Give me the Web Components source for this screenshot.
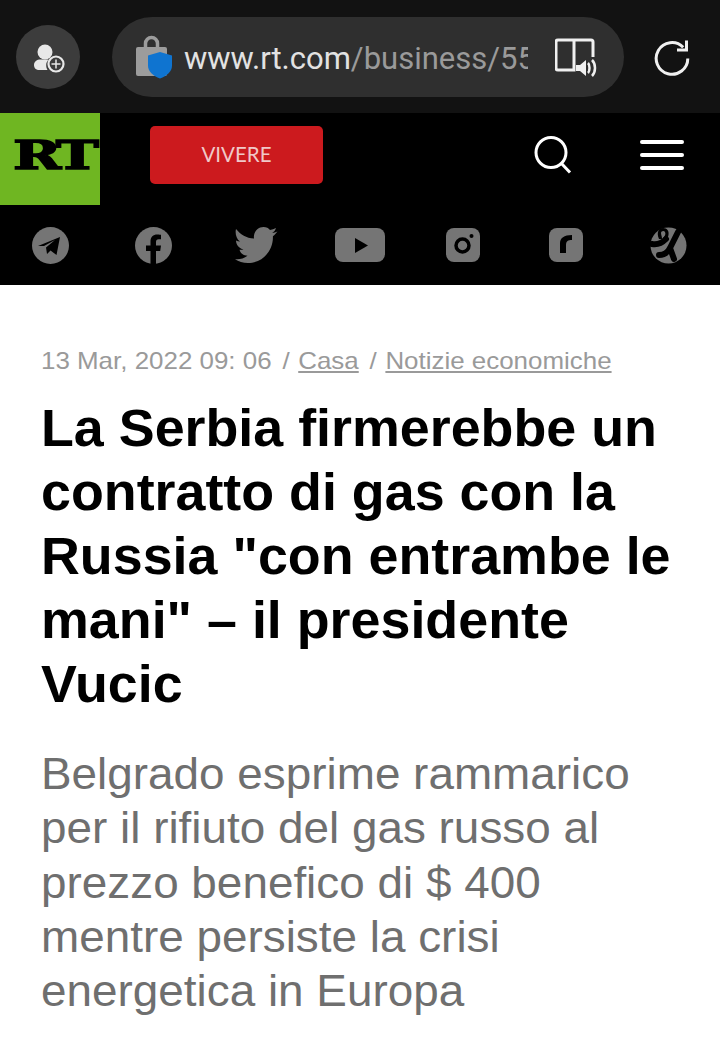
<!DOCTYPE html>
<html lang="it">
<head>
<meta charset="utf-8">
<title>RT</title>
<style>
    html, body { margin: 0; background: #fff; }
    body { width: 720px; height: 1040px; overflow: hidden; font-family: "Liberation Sans", Arial, sans-serif; }
</style>
</head>
<body>
<browser-bar url-host="www.rt.com" url-path="/business/552"></browser-bar>
<site-header label="VIVERE"></site-header>
<social-row></social-row>
<article-head>
    <span slot="date">13 Mar, 2022 09: 06</span>
    <a slot="crumb">Casa</a>
    <a slot="crumb2">Notizie economiche</a>
    <span slot="title">La Serbia firmerebbe un contratto di gas con la Russia "con entrambe le mani" – il presidente Vucic</span>
    <span slot="summary">Belgrado esprime rammarico per il rifiuto del gas russo al prezzo benefico di $ 400 mentre persiste la crisi energetica in Europa</span>
</article-head>

<script>
(function () {
    'use strict';

    class BrowserBar extends HTMLElement {
        constructor () {
            super();
            this.attachShadow({ mode: 'open' });
            this.shadowRoot.innerHTML = `
                <style>
                    :host { display: flex; align-items: center; height: 113px; padding: 0 26px 0 16px; box-sizing: border-box; background: #121212; }
                    .profile { width: 64px; height: 64px; border-radius: 50%; background: #3c3c3c; display: flex; align-items: center; justify-content: center; flex: none; }
                    .pill { margin-left: 32px; width: 512px; height: 80px; border-radius: 40px; background: #2f2f2f; display: flex; align-items: center; padding-left: 24px; box-sizing: border-box; flex: none; }
                    .lock { flex: none; }
                    .url { margin-left: 11px; width: 344px; overflow: hidden; white-space: nowrap; font: 31px Roboto, sans-serif; color: #9a9a9a; line-height: 40px; margin-top: 4px; }
                    .url b { font-weight: 400; color: #e2e2e2; }
                    .reader { margin-left: 27px; flex: none; }
                    .reload { margin-left: 28px; margin-top: 2px; flex: none; }
                </style>
                <div class="profile">
                    <svg width="36" height="36" viewBox="0 0 36 36">
                        <circle cx="15" cy="13" r="7.500" fill="#e8e8e8"/>
                        <path d="M4 26c0-3.500 3-5.500 6.500-5.500h8c-1.500 2-2.300 3.500-2.300 5.500 0 2 .4 3.500 1.300 5h-8C6 31 4 29 4 26z" fill="#e8e8e8"/>
                        <circle cx="26" cy="25" r="7.500" fill="#3c3c3c" stroke="#e8e8e8" stroke-width="2.200"/>
                        <path d="M26 20.500v9M21.500 25h9" stroke="#e8e8e8" stroke-width="1.500"/>
                    </svg>
                </div>
                <div class="pill">
                    <svg class="lock" width="37" height="44" viewBox="0 0 37 44">
                        <path d="M9.500 14V8.500a6 6 0 0 1 12 0V14" fill="none" stroke="#9c9c9c" stroke-width="3.500"/>
                        <rect x="0" y="12" width="31" height="29" rx="2" fill="#9c9c9c"/>
                        <path d="M24 17l12 3.500v10c0 6-5 10.500-12 13-7-2.500-12-7-12-13v-10z" fill="#0f74d0"/>
                    </svg>
                    <div class="url"><b>${this.getAttribute('url-host')}</b>${this.getAttribute('url-path')}</div>
                    <svg class="reader" width="42" height="40" viewBox="0 0 42 40">
                        <path d="M19 33H3a2 2 0 0 1-2-2V5a2 2 0 0 1 2-2h16zM19 3h17a2 2 0 0 1 2 2v15M19 3v19" fill="none" stroke="#f0f0f0" stroke-width="3"/>
                        <path d="M21 28h4l6-5v16l-6-5h-4z" fill="#f0f0f0"/>
                        <path d="M33 26c2 2 2 8 0 10M37 23c4 4 4 12 0 16" fill="none" stroke="#f0f0f0" stroke-width="2.500"/>
                    </svg>
                </div>
                <svg class="reload" width="38" height="38" viewBox="0 0 38 38">
                    <path d="M31.200 8.300A15.800 15.800 0 1 0 35.800 19.500" fill="none" stroke="#f0f0f0" stroke-width="3"/>
                    <path d="M25 11h9.500V1.500" fill="none" stroke="#f0f0f0" stroke-width="3"/>
                </svg>
            `;
        }
    }

    class SiteHeader extends HTMLElement {
        constructor () {
            super();
            this.attachShadow({ mode: 'open' });
            this.shadowRoot.innerHTML = `
                <style>
                    :host { display: flex; align-items: center; height: 92px; background: #000; }
                    .logo { width: 100px; height: 92px; background: #6fb622; overflow: hidden; flex: none; position: relative; }
                    .logo span { position: absolute; left: 13px; top: 16px; font: 700 40px/52px "DejaVu Serif", serif; color: #000; letter-spacing: -3px; transform: scaleX(1.45); transform-origin: left; -webkit-text-stroke: 1.500px #000; }
                    .live { margin: 0 0 8px 50px; width: 173px; height: 58px; background: #cc1a1e; border-radius: 5px; color: #f0c8c8; font: 20.500px/56px Lato, sans-serif; text-align: center; flex: none; }
                    .search { margin: 0 0 8px 211px; flex: none; }
                    .menu { margin: 0 0 9px 68px; width: 44px; display: flex; flex-direction: column; gap: 9px; flex: none; }
                    .menu i { display: block; height: 4px; border-radius: 2px; background: #fff; }
                </style>
                <div class="logo"><span>RT</span></div>
                <div class="live">${this.getAttribute('label')}</div>
                <svg class="search" width="38" height="38" viewBox="0 0 38 38">
                    <circle cx="17" cy="16.500" r="15" fill="none" stroke="#fff" stroke-width="3"/>
                    <path d="M27 27l9 9.500" stroke="#fff" stroke-width="3"/>
                </svg>
                <div class="menu"><i></i><i></i><i></i></div>
            `;
        }
    }

    class SocialRow extends HTMLElement {
        constructor () {
            super();
            this.attachShadow({ mode: 'open' });
            this.shadowRoot.innerHTML = `
                <style>
                    :host { display: grid; grid-template-columns: repeat(7, 103px); align-items: center; justify-items: center; height: 80px; margin-left: -1px; background: #000; }
                    svg { display: block; }
                </style>
                <svg width="37" height="37" viewBox="0 0 37 37">
                    <circle cx="18.500" cy="18.500" r="18.500" fill="#757575"/>
                    <path d="M6 19l22-9-3.500 18-6-4.500-3.500 3.500-1-6.500 9-7.500-11 6z" fill="#000"/>
                </svg>
                <svg width="37" height="37" viewBox="0 0 37 37">
                    <circle cx="18.500" cy="18.500" r="18.500" fill="#757575"/>
                    <path d="M15.500 37V24H11v-5.500h4.500v-4c0-4.500 2.700-7 6.700-7 2 0 3.800.3 3.800.3v4.500h-2.200c-2.200 0-2.800 1.300-2.800 2.700v3.500h5l-.8 5.500h-4.200v13z" fill="#000"/>
                </svg>
                <svg width="43" height="36" viewBox="0 0 43 36">
                    <path d="M1 2c5 6 10 9 18 9.500C18 5 23 0 28.500 0c3 0 5 1.300 6.500 3 2-.4 4-1 6-2-.6 2-2 4-3.800 5 1.800-.2 3.500-.7 5.200-1.400-1.200 1.800-2.800 3.500-4.500 4.700C38.500 22 29 36 13 36c-5 0-9.500-1.400-13-3.800 4.500.5 9-.8 12.500-3.500-4 0-7-2.500-8-6 1.300.2 2.700.2 4-.2-4.300-1-7.500-4.700-7.500-9 1.200.7 2.600 1.100 4 1.100C1 12 0 6 1 2z" fill="#757575"/>
                </svg>
                <svg width="50" height="34" viewBox="0 0 50 34">
                    <rect width="50" height="34" rx="8" fill="#757575"/>
                    <path d="M20 10l13 7.500L20 25z" fill="#000"/>
                </svg>
                <svg width="34" height="34" viewBox="0 0 34 34">
                    <rect width="34" height="34" rx="8" fill="#757575"/>
                    <circle cx="16.500" cy="17.500" r="6.500" fill="none" stroke="#000" stroke-width="3.500"/>
                    <circle cx="25.500" cy="8" r="2" fill="#000"/>
                </svg>
                <svg width="34" height="34" viewBox="0 0 34 34">
                    <rect width="34" height="34" rx="8" fill="#757575"/>
                    <path d="M11 25V15c0-5 4-8 12-8v5c-4 0-6 1-6 5v8z" fill="#000"/>
                </svg>
                <svg width="37" height="37" viewBox="0 0 37 37">
                    <circle cx="18.500" cy="18.500" r="18" fill="#757575"/>
                    <g fill="none" stroke="#000" stroke-width="6" stroke-linecap="round">
                        <path d="M28 5L20 21M2 17c5 1 10-1 14-5M20 21c-2 4-6 7-11 7M20 21l4 11"/>
                    </g>
                    <path d="M9 12C6 5 9 1 13 1s7 3 5 9l-3 3-2-2c2-2 3-4 2-6s-4-1-4 1 1 3 1 6z" fill="#000"/>
                </svg>
            `;
        }
    }

    class ArticleHead extends HTMLElement {
        constructor () {
            super();
            this.attachShadow({ mode: 'open' });
            this.shadowRoot.innerHTML = `
                <style>
                    :host { display: block; padding: 61px 0 0 41px; background: #fff; }
                    /* the source text renders a bit wider than Liberation, hence the scaleX */
                    .meta, h1, p { transform-origin: left; }
                    .meta { width: 600px; font-size: 24px; line-height: 30px; color: #9a9a9a; white-space: nowrap; display: flex; transform: scaleX(1.08); }
                    .sep { margin: 0 8px 0 10px; }
                    ::slotted(a) { color: #9a9a9a; text-decoration: underline; }
                    h1 { width: 600px; margin: 21px 0 0; font-size: 51px; line-height: 64px; font-weight: 700; color: #000; transform: scaleX(1.055); }
                    p { width: 620px; margin: 30px 0 0; font-size: 45px; line-height: 54.250px; color: #6f6f6f; transform: scaleX(1.019); }
                </style>
                <div class="meta">
                    <slot name="date"></slot><span class="sep">/</span><slot name="crumb"></slot><span class="sep">/</span><slot name="crumb2"></slot>
                </div>
                <h1><slot name="title"></slot></h1>
                <p><slot name="summary"></slot></p>
            `;
        }
    }

    window.customElements.define('browser-bar', BrowserBar);
    window.customElements.define('site-header', SiteHeader);
    window.customElements.define('social-row', SocialRow);
    window.customElements.define('article-head', ArticleHead);
})();
</script>
</body>
</html>
